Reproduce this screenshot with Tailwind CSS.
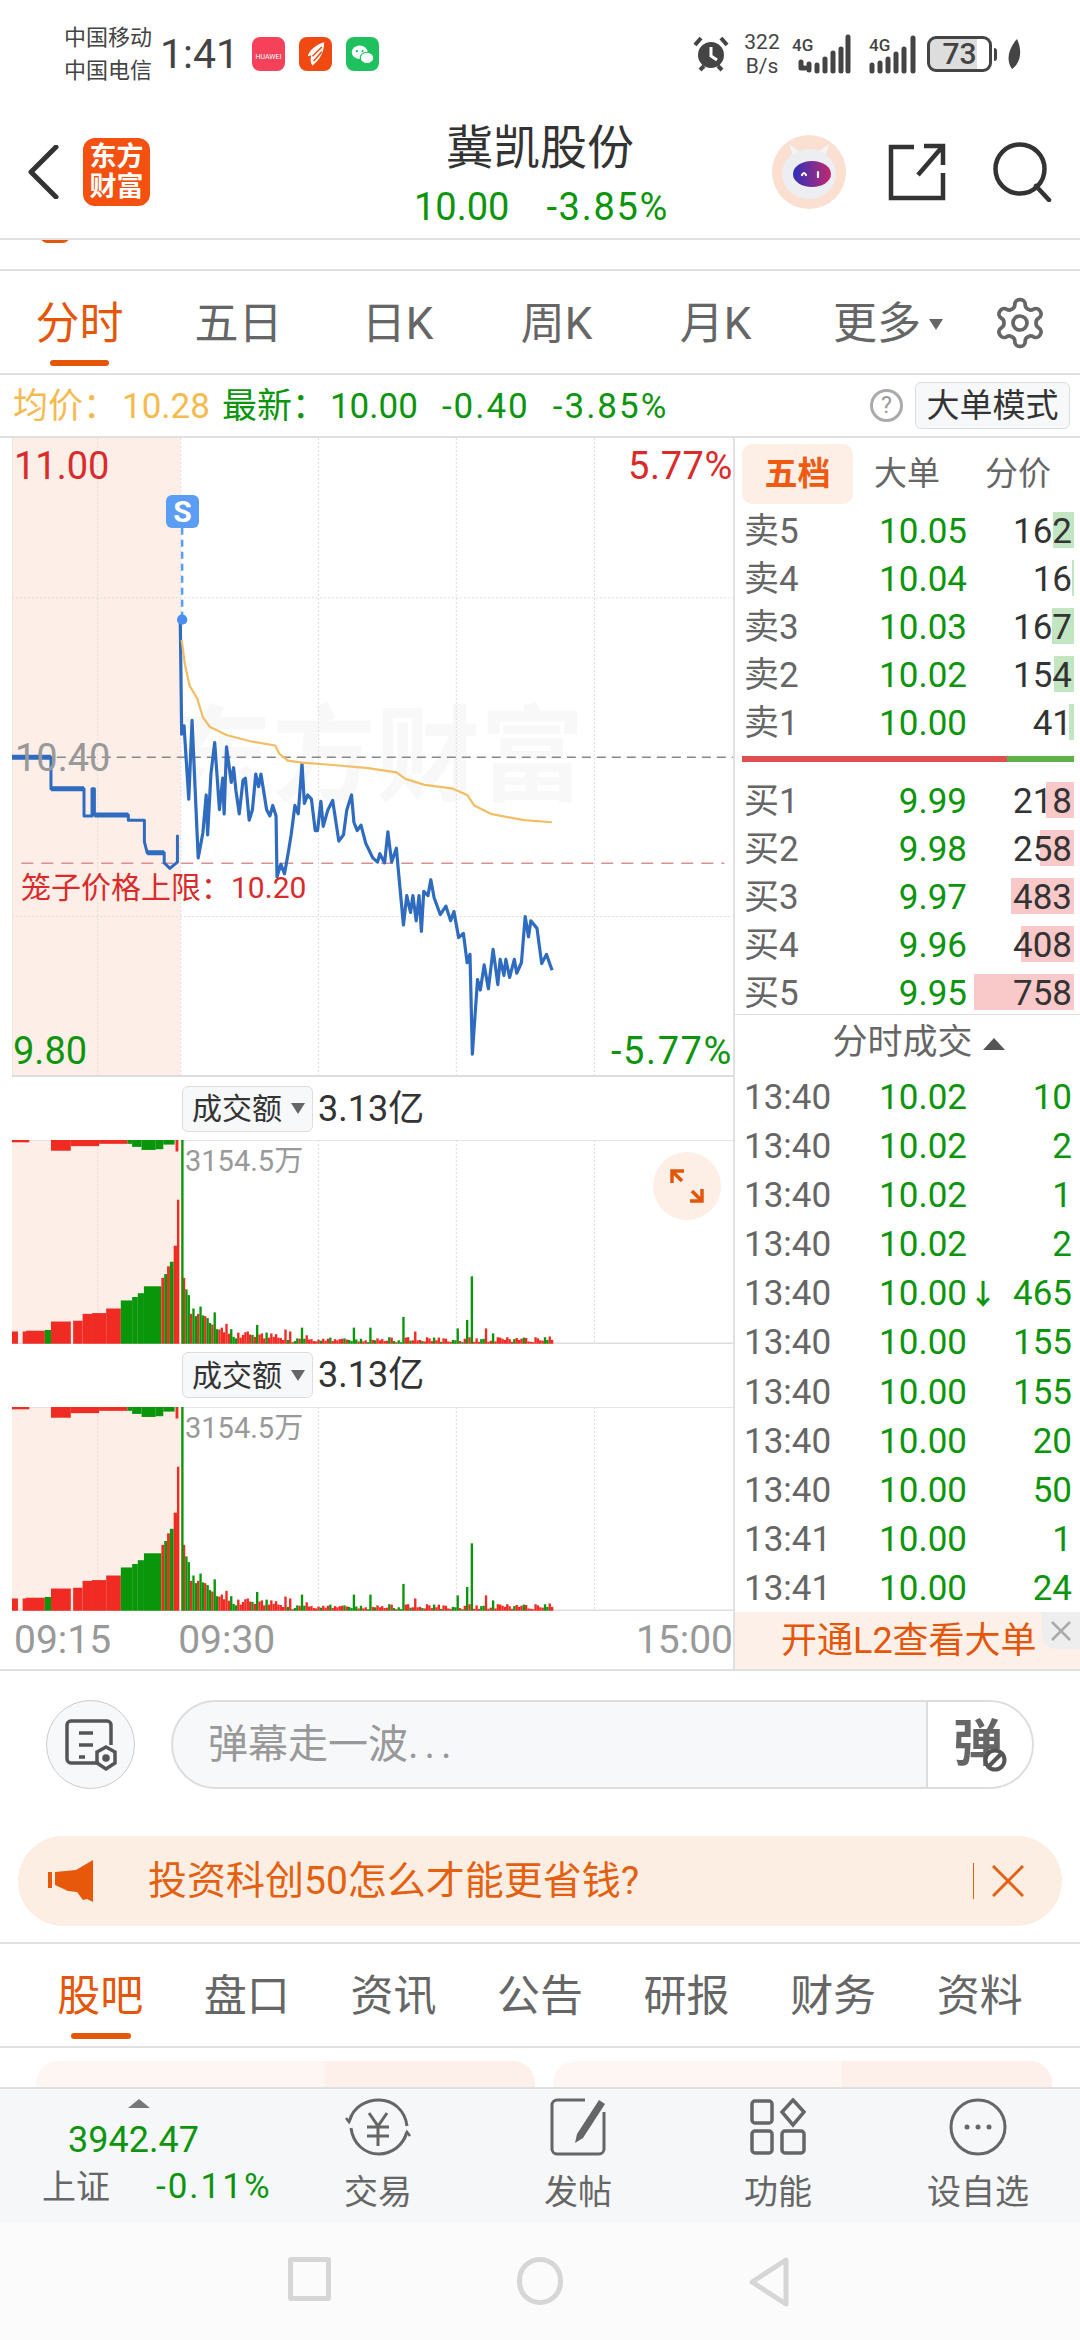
<!DOCTYPE html>
<html lang="zh-CN">
<head>
    <meta charset="UTF-8">
    <meta name="viewport" content="width=device-width, initial-scale=1.0">
    <title>冀凯股份</title>
    <script src="https://cdn.jsdelivr.net/npm/@tailwindcss/browser@4"></script>
</head>
<body class="bg-white text-[#333] [font-family:Roboto,'Noto_Sans_CJK_SC',sans-serif]">
<div class="w-[1080px] h-[2340px] overflow-hidden flex flex-col">

    <!-- Status bar -->
    <div class="h-[108px] flex items-center pl-[64px] pr-[58px] text-[#444]">
        <div class="text-[22px] leading-[33px] w-[96px]">中国移动<br>中国电信</div>
        <div class="text-[41px] w-[92px] leading-none">1:41</div>
        <div class="flex gap-[14px]">
            <div class="w-[33px] h-[34px] rounded-[8px] bg-[#f5425a] text-white text-[7px] flex items-end justify-center pb-[9px]">HUAWEI</div>
            <div class="w-[33px] h-[34px] rounded-[8px] bg-[#f04a12] flex items-center justify-center">
                <svg viewBox="0 0 24 24" class="w-[28px] h-[28px]"><path d="M19 2C12 4 6 9 5 14l3-1c-1 3-1 6 1 9 6-5 10-11 10-20Z" fill="#fff"/><path d="M17 6 9 14M17 10l-7 8" stroke="#f04a12" stroke-width="1.3"/></svg>
            </div>
            <div class="w-[33px] h-[34px] rounded-[8px] bg-[#1fc15e] flex items-center justify-center">
                <svg viewBox="0 0 24 24" class="w-[27px] h-[27px]"><ellipse cx="9.5" cy="10" rx="7" ry="6" fill="#fff"/><ellipse cx="16" cy="15" rx="6" ry="5" fill="#fff" stroke="#1fc15e"/><circle cx="7" cy="9" r="1" fill="#1fc15e"/><circle cx="12" cy="9" r="1" fill="#1fc15e"/></svg>
            </div>
        </div>
        <div class="ml-auto flex items-center">
            <svg viewBox="0 0 36 38" class="w-[36px] h-[38px]"><circle cx="18" cy="20" r="13" fill="#444"/><path d="M18 12v9l6 4" stroke="#fff" stroke-width="3" fill="none"/><path d="M2 10 8 3M34 10 28 3M7 35l4-4M29 35l-4-4" stroke="#444" stroke-width="4"/></svg>
            <div class="ml-[13px] w-[40px] text-[21px] leading-[24px] text-center">322<br>B/s</div>
            <div class="ml-[10px] w-[67px] relative h-[40px]">
                <span class="absolute left-0 top-[-1px] text-[17px] font-medium">4G</span>
                <svg viewBox="0 0 62 40" class="absolute right-0 top-0 w-[62px] h-[40px]"><path d="M4 34v-6M4 34h4M12 36v-6M20 37v-6M28 37v-12M36 37v-18M44 37v-22M51 37v-34" stroke="#444" stroke-width="5" stroke-linecap="round"/></svg>
            </div>
            <div class="ml-[10px] w-[50px] relative h-[40px]">
                <span class="absolute left-0 top-[-1px] text-[17px] font-medium">4G</span>
                <svg viewBox="0 0 50 40" class="w-full h-full"><path d="M3 37v-6M11 37v-8M19 37v-12M27 37v-17M35 37v-22M44 37v-33" stroke="#444" stroke-width="5" stroke-linecap="round"/></svg>
            </div>
            <div class="ml-[8px] w-[65px] h-[36px] rounded-[9px] border-[3px] border-[#444] bg-[linear-gradient(90deg,#ddd_80%,#fff_80%)] text-[30px] leading-[30px] text-center font-medium">73</div>
            <div class="ml-[2px] w-[3px] h-[13px] bg-[#444] rounded-r"></div>
            <svg viewBox="0 0 16 30" class="ml-[9px] w-[16px] h-[30px]"><path d="M11 0C15 8 17 22 6 30 0 22 2 10 11 0Z" fill="#444"/></svg>
        </div>
    </div>

    <!-- Header -->
    <div class="h-[132px] border-b-2 border-[#e0e0e0] grid grid-cols-[1fr_auto_1fr] items-start">
        <div class="flex items-center pt-[30px]">
            <svg viewBox="0 0 34 54" class="ml-[26px] w-[34px] h-[54px]"><path d="M30 2 5 27l25 25" fill="none" stroke="#333" stroke-width="5" stroke-linecap="round" stroke-linejoin="round"/></svg>
            <div class="ml-[23px] w-[67px] h-[68px] rounded-[12px] bg-[#f4500f] text-white text-[27px] leading-[30px] font-bold text-center flex items-center justify-center">东方<br>财富</div>
        </div>
        <div class="text-center">
            <div class="text-[47px] leading-[56px] mt-[12px]">冀凯股份</div>
            <div class="text-[38px] leading-[44px] mt-[9px] text-[#0c950c] flex justify-center gap-[37px] pl-[3px]"><span>10.00</span><span class="tracking-[1.7px]">-3.85%</span></div>
        </div>
        <div class="flex items-center justify-end pr-[28px] pt-[26px]">
            <svg viewBox="0 0 76 76" class="w-[76px] h-[76px]">
                <defs><linearGradient id="visor" x1="0" x2="1"><stop offset="0" stop-color="#2f2fb8"/><stop offset="1" stop-color="#c02a6f"/></linearGradient></defs>
                <ellipse cx="38" cy="38" rx="37" ry="37" fill="#fbe0d2"/>
                <path d="M22 22 18 10l10 7h20l10-7-4 12z" fill="#f4f4f6"/>
                <ellipse cx="38" cy="40" rx="27" ry="25" fill="#eceef2"/>
                <ellipse cx="41" cy="40" rx="19" ry="13" fill="url(#visor)"/>
                <path d="M31 41q2-4 4 0M47 38v5" stroke="#fff" stroke-width="2.2" fill="none" stroke-linecap="round"/>
            </svg>
            <svg viewBox="0 0 58 58" class="ml-[41px] w-[58px] h-[58px]"><path d="M26 4H3v51h52V30M30 32 55 3M36 3h19v19" fill="none" stroke="#333" stroke-width="4.5"/></svg>
            <svg viewBox="0 0 60 60" class="ml-[46px] w-[60px] h-[60px]"><circle cx="28" cy="27" r="24.5" fill="none" stroke="#333" stroke-width="4.5"/><path d="M44 44l13 14" stroke="#333" stroke-width="4.5" stroke-linecap="round"/></svg>
        </div>
    </div>

    <!-- Scrolled-away strip -->
    <div class="h-[31px] border-b-2 border-[#e0e0e0] overflow-hidden">
        <div class="ml-[40px] -mt-[12px] w-[30px] h-[15px] rounded-full bg-[#e4570a]"></div>
    </div>

    <!-- Chart period tabs -->
    <div class="h-[104px] border-b-2 border-[#e0e0e0] flex text-[44px] text-[#666] relative">
        <div class="w-[159px] text-center text-[#e4570a] pt-[24px] leading-[58px]">分时</div>
        <div class="w-[159px] text-center pt-[24px] leading-[58px]">五日</div>
        <div class="w-[159px] text-center pt-[24px] leading-[58px]">日K</div>
        <div class="w-[159px] text-center pt-[24px] leading-[58px]">周K</div>
        <div class="w-[159px] text-center pt-[24px] leading-[58px]">月K</div>
        <div class="ml-[38px] pt-[24px] leading-[58px] flex items-start">更多<span class="w-0 h-0 mt-[24px] ml-[8px] border-x-[7px] border-x-transparent border-t-[11px] border-t-[#666]"></span></div>
        <svg viewBox="0 0 24 24" class="ml-auto mr-[32px] mt-[24px] w-[56px] h-[56px]" fill="none" stroke="#666" stroke-width="1.6" stroke-linecap="round" stroke-linejoin="round"><path d="M12.22 2h-.44a2 2 0 0 0-2 2v.18a2 2 0 0 1-1 1.73l-.43.25a2 2 0 0 1-2 0l-.15-.08a2 2 0 0 0-2.73.73l-.22.38a2 2 0 0 0 .73 2.73l.15.1a2 2 0 0 1 1 1.72v.51a2 2 0 0 1-1 1.74l-.15.09a2 2 0 0 0-.73 2.73l.22.38a2 2 0 0 0 2.73.73l.15-.08a2 2 0 0 1 2 0l.43.25a2 2 0 0 1 1 1.73V20a2 2 0 0 0 2 2h.44a2 2 0 0 0 2-2v-.18a2 2 0 0 1 1-1.73l.43-.25a2 2 0 0 1 2 0l.15.08a2 2 0 0 0 2.73-.73l.22-.39a2 2 0 0 0-.73-2.73l-.15-.08a2 2 0 0 1-1-1.74v-.5a2 2 0 0 1 1-1.74l.15-.09a2 2 0 0 0 .73-2.73l-.22-.38a2 2 0 0 0-2.73-.73l-.15.08a2 2 0 0 1-2 0l-.43-.25a2 2 0 0 1-1-1.73V4a2 2 0 0 0-2-2z"/><circle cx="12" cy="12" r="3"/></svg>
        <div class="absolute left-[50px] bottom-[7px] w-[59px] h-[6px] rounded-full bg-[#e4570a]"></div>
    </div>

    <!-- Quote line -->
    <div class="h-[63px] border-b-2 border-[#e0e0e0] flex items-center pl-[13px] pr-[10px] text-[35px]">
        <span class="text-[#f5bb50] relative top-[2px]">均价：</span><span class="ml-[4px] text-[#f5bb50] relative top-[2px]">10.28</span>
        <span class="ml-[12px] text-[#0c950c] relative top-[2px]">最新：</span><span class="ml-[3px] text-[#0c950c] relative top-[2px]">10.00</span>
        <span class="ml-[24px] text-[#0c950c] relative top-[2px] tracking-[2px]">-0.40</span><span class="ml-[23px] text-[#0c950c] relative top-[2px] tracking-[2px]">-3.85%</span>
        <span class="ml-auto w-[33px] h-[33px] rounded-full border-[3px] border-[#aaa] text-[#999] text-[23px] leading-[27px] text-center">?</span>
        <span class="ml-[12px] w-[155px] h-[47px] rounded-[6px] border border-[#ddd] bg-[#f7f8fa] text-[33px] leading-[45px] text-center">大单模式</span>
    </div>

    <!-- Chart and order book -->
    <div class="h-[1233px] border-b-2 border-[#e0e0e0] flex">
        <div class="w-[733px] pl-[12px] flex flex-col">
            <div class="h-[640px] relative overflow-hidden border-b-2 border-[#ddd]">
                <div class="absolute left-[156px] top-[268px] text-[#f8f8f8] text-[104px] leading-[104px] font-bold whitespace-nowrap">东方财富</div>
                <svg viewBox="25.4 19 1528 1519" preserveAspectRatio="none" class="absolute inset-0 w-full h-full">
                    <rect x="25" y="19" width="358" height="1520" fill="#fdeee8"/>
                    <path d="M207 19V1538M383 19V1538M675 19V1538M967 19V1538M1260 19V1538M25 400H1553M25 1160H1553" stroke="#ddd" stroke-width="1" stroke-dasharray="2 2" vector-effect="non-scaling-stroke" fill="none"/>
                    <path d="M25 19V1538" stroke="#ddd" stroke-width="1.5" vector-effect="non-scaling-stroke"/>
                    <path d="M25 780H1553" stroke="#888" stroke-width="1.5" stroke-dasharray="9 6" vector-effect="non-scaling-stroke"/>
                    <path d="M45 1033H1535" stroke="#dc8f8f" stroke-width="1.5" stroke-dasharray="12 8" vector-effect="non-scaling-stroke"/>
                    <polyline fill="none" stroke="#2f6cbf" stroke-width="3" stroke-linejoin="round" stroke-linecap="round" vector-effect="non-scaling-stroke" points="108,780 108,855 178,855 178,920 195,920 195,855 200,855 200,918 272,918 272,930 306,930 306,982 312,1008 348,1008 348,1032 360,1045 376,1030 376,968"/>
                    <path d="M25 780H108M108 855H178M200 918H272M312 1008H348" stroke="#2f6cbf" stroke-width="5" vector-effect="non-scaling-stroke"/>
                    <polyline fill="none" stroke="#2f6cbf" stroke-width="3.2" stroke-linejoin="round" vector-effect="non-scaling-stroke" points="382,452 385,725 390,705 400,880 407,692 420,1020 430,960 437,870 440,965 447,820 455,745 465,905 472,830 475,915 480,755 490,840 495,805 500,860 507,915 515,835 520,830 528,930 535,905 542,820 548,850 553,820 565,905 572,920 578,895 585,920 587,1065 595,1035 603,1058 612,1000 617,965 625,895 632,915 640,795 645,890 652,870 660,880 668,955 673,955 680,885 685,945 695,905 705,883 718,980 728,965 735,905 745,870 750,935 757,955 765,942 775,985 790,1020 800,1030 805,1010 815,1032 822,958 830,1030 840,997 845,1060 855,1180 862,1110 870,1150 875,1110 882,1170 888,1110 893,1195 898,1100 907,1110 913,1072 920,1115 933,1155 945,1135 955,1170 962,1148 972,1210 982,1200 990,1270 996,1250 1001,1488 1012,1310 1018,1335 1026,1275 1035,1332 1045,1238 1055,1322 1060,1262 1068,1300 1072,1262 1080,1305 1090,1262 1095,1295 1105,1270 1113,1160 1120,1208 1125,1170 1138,1188 1148,1272 1158,1250 1170,1288"/>
                    <polyline fill="none" stroke="#f2bd63" stroke-width="2.2" stroke-linejoin="round" vector-effect="non-scaling-stroke" points="385,500 392,560 402,610 418,640 430,685 445,708 480,727 530,742 583,752 592,772 610,788 640,793 700,798 780,806 840,816 860,832 900,846 960,855 990,870 1005,895 1040,915 1110,930 1170,935"/>
                    <path d="M386 233V452" stroke="#5b9df5" stroke-width="2.5" stroke-dasharray="7 5" vector-effect="non-scaling-stroke"/>
                    <ellipse cx="386" cy="452" rx="11" ry="12" fill="#4a8ff0"/>
                </svg>
                <div class="absolute left-[2px] top-[6px] text-[38px] leading-[44px] text-[#d92b2b]">11.00</div>
                <div class="absolute right-[0px] top-[6px] text-[38px] leading-[44px] text-[#d92b2b] tracking-[0.6px]">5.77%</div>
                <div class="absolute left-[3px] top-[298px] text-[38px] leading-[44px] text-[#999]">10.40</div>
                <div class="absolute left-[1px] bottom-[2px] text-[38px] leading-[44px] text-[#0c950c]">9.80</div>
                <div class="absolute right-[0px] bottom-[2px] text-[38px] leading-[44px] text-[#0c950c] tracking-[1.6px]">-5.77%</div>
                <div class="absolute left-[9px] top-[430px] text-[30px] leading-[40px] text-[#d92b2b] whitespace-nowrap">笼子价格上限：10.20</div>
                <div class="absolute left-[154px] top-[57px] w-[33px] h-[33px] rounded-[6px] bg-[#5b9df5] text-white text-[30px] leading-[33px] font-bold text-center">S</div>
            </div>

            <div class="h-[63px] flex items-center pl-[170px]">
                <div class="w-[131px] h-[46px] rounded-[6px] border border-[#ddd] bg-[#f7f8fa] flex items-center pl-[9px] text-[30px]">成交额<span class="ml-[9px] w-0 h-0 border-x-[7px] border-x-transparent border-t-[11px] border-t-[#666]"></span></div>
                <div class="ml-[5px] text-[36px]">3.13亿</div>
            </div>
            <div class="h-[204px] relative">
                <svg data-vol viewBox="25.4 160 1528 532" preserveAspectRatio="none" class="absolute inset-0 w-full h-full"></svg>
                <div class="absolute left-[173px] top-[3px] text-[29px] leading-[36px] text-[#999]">3154.5万</div>
                <div class="absolute left-[641px] top-[12px] w-[68px] h-[68px] rounded-full bg-[#fdeee6] flex items-center justify-center">
                    <svg viewBox="0 0 36 36" class="w-[36px] h-[36px]" fill="none" stroke="#e4570a" stroke-width="3.5"><path d="M3 15V3h12M3 3l10 10M33 21v12H21M33 33 23 23"/></svg>
                </div>
            </div>

            <div class="h-[63px] flex items-center pl-[170px]">
                <div class="w-[131px] h-[46px] rounded-[6px] border border-[#ddd] bg-[#f7f8fa] flex items-center pl-[9px] text-[30px]">成交额<span class="ml-[9px] w-0 h-0 border-x-[7px] border-x-transparent border-t-[11px] border-t-[#666]"></span></div>
                <div class="ml-[5px] text-[36px]">3.13亿</div>
            </div>
            <div class="h-[204px] relative">
                <svg data-vol viewBox="25.4 160 1528 532" preserveAspectRatio="none" class="absolute inset-0 w-full h-full"></svg>
                <div class="absolute left-[173px] top-[3px] text-[29px] leading-[36px] text-[#999]">3154.5万</div>
            </div>

            <div class="flex-1 flex items-center text-[39px] text-[#999] pl-[2px]">
                <span>09:15</span><span class="ml-[67px]">09:30</span><span class="ml-auto">15:00</span>
            </div>
        </div>

        <!-- Order book -->
        <div class="flex-1 border-l-2 border-[#e0e0e0] flex flex-col">
            <div class="h-[68px] pt-[6px] pl-[7px] flex text-[33px] text-[#666]">
                <div class="w-[111px] h-[60px] rounded-[10px] bg-[#fdeee6] text-[#ef5a10] font-bold text-center leading-[60px]">五档</div>
                <div class="w-[108px] text-center leading-[60px]">大单</div>
                <div class="w-[114px] text-center leading-[60px]">分价</div>
            </div>
            <div id="sell-rows"></div>
            <div class="mt-[10px] ml-[7px] mr-[6px] h-[6px] flex">
                <div class="w-[265px] bg-[#e04f4f]"></div><div class="flex-1 bg-[#5db04a]"></div>
            </div>
            <div id="buy-rows" class="mt-[14px] h-[238px]"></div>
            <div class="h-[58px] border-t border-[#ddd] flex items-center justify-center pl-[22px] text-[35px] text-[#666]">分时成交<span class="ml-[10px] w-0 h-0 border-x-[11px] border-x-transparent border-b-[12px] border-b-[#555]"></span></div>
            <div id="trade-rows"></div>
            <div class="flex-1 relative bg-[#fdf0e8] flex items-center pl-[46px] text-[36px] text-[#e4570a]">
                开通L2查看大单
                <div class="absolute right-0 top-0 w-[38px] h-[37px] rounded-bl-[14px] bg-[#eeeeee] flex items-center justify-center">
                    <svg viewBox="0 0 24 24" class="w-[24px] h-[24px]"><path d="M3 3l18 18M21 3 3 21" stroke="#aaa" stroke-width="2.5"/></svg>
                </div>
            </div>
        </div>
    </div>

    <!-- Danmaku input -->
    <div class="h-[165px] flex items-start pt-[29px] pl-[46px]">
        <div class="w-[89px] h-[89px] rounded-full border border-[#ccc] bg-[#f7f8fa] flex items-center justify-center">
            <svg viewBox="0 0 56 56" class="w-[56px] h-[56px]" fill="none" stroke="#555" stroke-width="3.5"><path d="M36 46H8a4 4 0 0 1-4-4V8a4 4 0 0 1 4-4h36a4 4 0 0 1 4 4v20M16 16h14M16 28h14M16 40h6"/><path d="M43 30 52 35v11l-9 6-9-6V35z"/><circle cx="43" cy="41" r="2" fill="#555"/></svg>
        </div>
        <div class="ml-[36px] w-[863px] h-[89px] rounded-full border-2 border-[#ddd] bg-[#f7f8fa] overflow-hidden flex">
            <div class="flex-1 pl-[35px] leading-[85px] text-[40px] text-[#999]">弹幕走一波<span class="tracking-[6px]">...</span></div>
            <div class="w-[106px] bg-white border-l-2 border-[#ddd] relative pl-[25px] text-[50px] leading-[85px] font-bold text-[#666]">弹
                <svg viewBox="0 0 24 24" class="absolute left-[55px] top-[46px] w-[24px] h-[24px]" fill="#fff" stroke="#555" stroke-width="4"><circle cx="12" cy="12" r="9.5"/><path d="M6 18 18 6"/></svg>
            </div>
        </div>
    </div>

    <!-- Notice -->
    <div class="mx-[18px] h-[90px] rounded-full bg-[#fdeee4] flex items-center text-[39px] text-[#e4600f]">
        <svg viewBox="0 0 46 42" class="ml-[30px] w-[46px] h-[42px]"><path d="M0 12h4v16H0zM7 12 28 10 45 0v42l-6-3-4 1-6-8-9-1-13-6z" fill="#e8580a"/></svg>
        <span class="ml-[54px]">投资科创50怎么才能更省钱?</span>
        <span class="ml-auto w-[1px] h-[36px] bg-[#e4600f]"></span>
        <svg viewBox="0 0 32 32" class="ml-[18px] mr-[38px] w-[32px] h-[32px]"><path d="M1 1l30 30M31 1 1 31" stroke="#e4600f" stroke-width="3"/></svg>
    </div>

    <!-- Lower tabs -->
    <div class="mt-[16px] h-[106px] border-y-2 border-[#e0e0e0] grid grid-cols-7 px-[27px] text-[43px] text-[#666] relative">
        <div class="text-center pt-[24px] leading-[56px] text-[#e4570a]">股吧</div>
        <div class="text-center pt-[24px] leading-[56px]">盘口</div>
        <div class="text-center pt-[24px] leading-[56px]">资讯</div>
        <div class="text-center pt-[24px] leading-[56px]">公告</div>
        <div class="text-center pt-[24px] leading-[56px]">研报</div>
        <div class="text-center pt-[24px] leading-[56px]">财务</div>
        <div class="text-center pt-[24px] leading-[56px]">资料</div>
        <div class="absolute left-[71px] bottom-[7px] w-[60px] h-[6px] rounded-full bg-[#e4570a]"></div>
    </div>

    <!-- Peeking cards -->
    <div class="h-[41px] pt-[13px] pl-[36px] flex gap-[18px] overflow-hidden border-b-2 border-[#e0e0e0]">
        <div class="w-[499px] h-[60px] shrink-0 rounded-[22px] bg-[linear-gradient(90deg,#fef6f3_58%,#fdf0eb_58%)]"></div>
        <div class="w-[499px] h-[60px] shrink-0 rounded-[22px] bg-[linear-gradient(90deg,#fef6f3_58%,#fdf0eb_58%)]"></div>
    </div>

    <!-- Bottom toolbar -->
    <div class="h-[134px] bg-[#f6f7f9] grid grid-cols-[278px_repeat(4,200px)] text-[34px] text-[#666]">
        <div class="relative">
            <span class="absolute left-[128px] top-[10px] w-0 h-0 border-x-[11px] border-x-transparent border-b-[9px] border-b-[#777]"></span>
            <div class="absolute left-[68px] top-[30px] text-[36px] leading-[42px] text-[#0c950c]">3942.47</div>
            <div class="absolute left-[42px] top-[76px] leading-[44px]">上证</div>
            <div class="absolute left-[156px] top-[76px] text-[35px] leading-[44px] text-[#0c950c] tracking-[2px]">-0.11%</div>
        </div>
        <div class="flex flex-col items-center pt-[9px]">
            <svg viewBox="0 0 66 58" class="w-[66px] h-[58px]" fill="none" stroke="#666" stroke-width="3"><path d="M4 24C8 8 22 2 34 2c14 0 26 10 28 26M62 34C58 48 46 56 34 56 20 56 8 46 6 30"/><path d="M1 20l3 4 3-7M65 38l-3-4-3 7" stroke-width="2.5"/><path d="M24 15l9 13 9-13M22 29h22M22 38h22M33 28v20"/></svg>
            <div class="leading-[44px] mt-[14px]">交易</div>
        </div>
        <div class="flex flex-col items-center pt-[9px]">
            <svg viewBox="0 0 58 58" class="w-[58px] h-[58px]" fill="none" stroke="#666" stroke-width="3"><path d="M36 2H8a5 5 0 0 0-5 5v44a5 5 0 0 0 5 5h42a5 5 0 0 0 5-5V14"/><path d="M50 2l6 4-22 34-8 5 2-9z" fill="#666" stroke="none"/></svg>
            <div class="leading-[44px] mt-[14px]">发帖</div>
        </div>
        <div class="flex flex-col items-center pt-[9px]">
            <svg viewBox="0 0 56 58" class="w-[56px] h-[58px]" fill="none" stroke="#666" stroke-width="3.5"><rect x="2" y="3" width="20" height="22" rx="3"/><rect x="2" y="33" width="20" height="22" rx="3"/><rect x="32" y="33" width="22" height="22" rx="3"/><path d="M43 2l11 12-11 13-11-13z"/></svg>
            <div class="leading-[44px] mt-[14px]">功能</div>
        </div>
        <div class="flex flex-col items-center pt-[9px]">
            <svg viewBox="0 0 58 58" class="w-[58px] h-[58px]" fill="none" stroke="#666" stroke-width="3"><circle cx="29" cy="29" r="27"/><circle cx="18" cy="29" r="2.5" fill="#666" stroke="none"/><circle cx="29" cy="29" r="2.5" fill="#666" stroke="none"/><circle cx="40" cy="29" r="2.5" fill="#666" stroke="none"/></svg>
            <div class="leading-[44px] mt-[14px]">设自选</div>
        </div>
    </div>

    <!-- System navigation -->
    <div class="flex-1 bg-[#fbfbfb] flex items-start pt-[34px]">
        <div class="ml-[288px] w-[43px] h-[44px] rounded-[3px] border-[5px] border-[#d6d6d6]"></div>
        <div class="ml-[186px] w-[46px] h-[48px] rounded-full border-[5px] border-[#d6d6d6]"></div>
        <svg viewBox="0 0 42 50" class="ml-[185px] w-[42px] h-[50px]"><path d="M38 3 4 25l34 22z" fill="none" stroke="#d6d6d6" stroke-width="5" stroke-linejoin="round"/></svg>
    </div>
</div>

<script>
    const sell = [["卖5","10.05","162",21],["卖4","10.04","16",2],["卖3","10.03","167",22],["卖2","10.02","154",20],["卖1","10.00","41",5]];
    const buy = [["买1","9.99","218",28],["买2","9.98","258",34],["买3","9.97","483",63],["买4","9.96","408",53],["买5","9.95","758",100]];
    const trades = [["13:40","10.02","10"],["13:40","10.02","2"],["13:40","10.02","1"],["13:40","10.02","2"],["13:40","10.00","465",true],["13:40","10.00","155"],["13:40","10.00","155"],["13:40","10.00","20"],["13:40","10.00","50"],["13:41","10.00","1"],["13:41","10.00","24"]];

    function bookRow([label, price, vol, width], barClass) {
        return `<div class="relative h-[48px] grid grid-cols-[100px_123px_1fr] items-center pl-[9px] pr-[8px] text-[35px]">
            <div class="absolute right-[6px] top-[6px] h-[36px] ${barClass}" style="width:${width}px"></div>
            <span class="relative text-[#666]">${label}</span>
            <span class="relative text-right text-[#0c950c]">${price}</span>
            <span class="relative text-right text-[#333]">${vol}</span>
        </div>`;
    }
    document.getElementById("sell-rows").innerHTML = sell.map(r => bookRow(r, "bg-[#c2e5c2]")).join("");
    document.getElementById("buy-rows").innerHTML = buy.map(r => bookRow(r, "bg-[#f9c9c9]")).join("");
    document.getElementById("trade-rows").innerHTML = trades.map(([t, price, vol, down]) => `
        <div class="h-[49.1px] grid grid-cols-[100px_123px_1fr] items-center pl-[9px] pr-[8px] text-[35px]">
            <span class="text-[#666]">${t}</span>
            <span class="relative text-right text-[#0c950c]">${price}${down ? '<span class="absolute left-full top-[7px] ml-[2px] text-[28px] font-bold">↓</span>' : ''}</span>
            <span class="text-right text-[#0c950c]">${vol}</span>
        </div>`).join("");

    // Volume bars, in the same units as the picture crop (y 160 is the top, 692 the base)
    const RED = "#ef2b24", GREEN = "#0a960a";
    const rect = (x, y, w, h, fill) => `<rect x="${x}" y="${y}" width="${w}" height="${h}" fill="${fill}"/>`;
    const auction = [[22,16,660,RED],[48,7,660,RED],[55,40,658,RED],[95,13,656,GREEN],[108,42,634,RED],[155,20,632,RED],[175,20,614,RED],[195,30,612,RED],[225,31,600,RED],[256,24,579,GREEN],[280,12,570,GREEN],[292,13,560,GREEN],[305,37,542,GREEN],[342,6,520,RED],[348,6,510,GREEN],[354,6,490,RED],[360,8,478,GREEN],[368,7,436,RED],[375,5,316,RED]];
    const hang = [[22,40,166,RED],[108,42,188,RED],[150,60,176,RED],[210,60,170,RED],[270,10,170,GREEN],[280,20,178,GREEN],[300,30,186,GREEN],[330,16,184,GREEN],[346,24,172,GREEN],[372,6,190,RED]];
    const spikes = {390:520,395:550,400:565,410:600,415:620,425:595,435:620,440:625,455:610,465:655,480:640,508:635,525:660,545:643,555:665,587:558,592:628,605:655,615:660,640:650,650:670,738:658,750:650,785:650,848:628,855:622,880:660,893:645,970:652,990:630,1000:516,1012:632,1030:652,1045:665,1113:656,1165:673};
    const greens = [587, 1000, 848, 855, 640, 750, 785, 990, 410, 508];
    let seed = 7, bars = "";
    for (let x = 390; x <= 1172; x += 5) {
        seed = (seed * 137 + 91) % 256;
        const h = x < 600 ? 14 + Math.max(0, 500 - x) * 0.6 + seed % 20 : 4 + seed % 14;
        const y = spikes[x] || 692 - h;
        const color = greens.includes(x) ? GREEN : seed % 3 ? RED : GREEN;
        bars += rect(x - 2.5, y, 5, 692 - y, color);
    }
    const grid = `<rect x="25" y="160" width="358" height="532" fill="#fdeee8"/>
        <path d="M207 160V692M675 160V692M967 160V692M1260 160V692" stroke="#ddd" stroke-width="1" stroke-dasharray="2 2" vector-effect="non-scaling-stroke"/>
        <path d="M25 160H1553M22 691H1553" stroke="#ddd" stroke-width="1.5" vector-effect="non-scaling-stroke"/>`;
    const early = auction.map(([x, w, y, c]) => rect(x, y, w, 692 - y, c)).join("") + hang.map(([x, w, y, c]) => rect(x, 160, w, y - 160, c)).join("");
    document.querySelectorAll("[data-vol]").forEach(svg => {
        svg.innerHTML = grid + early + bars + rect(384, 160, 5, 532, GREEN);
    });
</script>
</body>
</html>
